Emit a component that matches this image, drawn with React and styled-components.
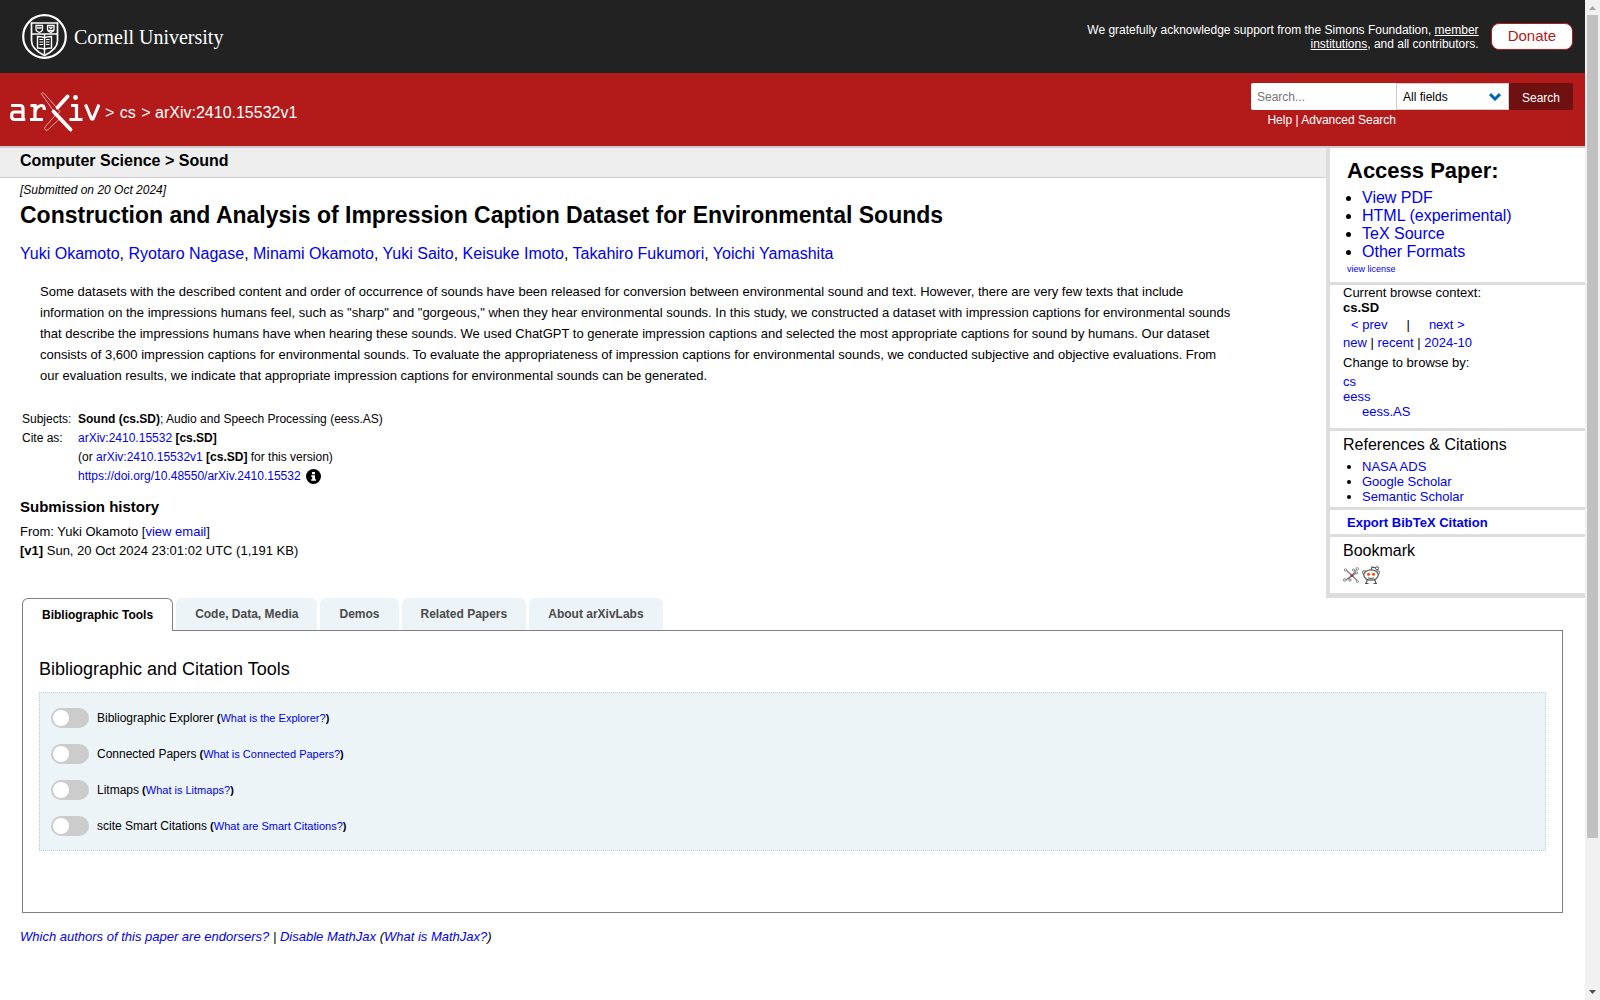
import React from "react";
import styled, { createGlobalStyle } from "styled-components";

const Global = createGlobalStyle`
  * { box-sizing: border-box; }
  body { margin: 0; background: #fff; color: #000; font: 13px/18px "Liberation Sans", Arial, sans-serif; overflow: hidden; }
  a { color: #0000ee; text-decoration: none; }
  h1, h2, h3, p, ul, blockquote { margin: 0; padding: 0; }
  button, input, select { font-family: inherit; }
`;

const Shell = styled.div`
  display: flex;
  align-items: flex-start;
`;
const Page = styled.div`
  flex: 1;
  min-width: 0;
`;

const Track = styled.div`
  flex: none;
  display: flex;
  flex-direction: column;
  align-items: center;
  width: 15px;
  height: 100vh;
  background: #f1f1f1;
`;
const Thumb = styled.div`
  width: 11px;
  height: 823px;
  margin-bottom: auto;
  background: #c1c1c1;
`;
const Arrow = styled.svg`
  display: block;
  flex: none;
  width: 15px;
  height: 15px;
  fill: ${(p) => p.$color};
`;

const CornellBar = styled.div`
  display: flex;
  align-items: center;
  justify-content: space-between;
  height: 73px;
  padding: 0 12px 0 22px;
  background: #222;
  color: #fff;
`;
const CornellLink = styled.a`
  display: flex;
  align-items: center;
  gap: 7px;
  color: #fff;
  font: 20px/24px "Liberation Serif", serif;
`;
const Crest = styled.svg`
  width: 45px;
  height: 45px;
`;
const Support = styled.div`
  display: flex;
  align-items: center;
  gap: 12px;
`;
const Thanks = styled.p`
  width: 400px;
  font-size: 12px;
  line-height: 14px;
  text-align: right;
  a { color: #fff; text-decoration: underline; }
`;
const Donate = styled.a`
  padding: 3px 16px 5px;
  border: 1px solid #b31b1b;
  border-radius: 8px;
  background: #fff;
  color: #b31b1b;
  font-size: 15px;
  line-height: 17px;
`;

const Banner = styled.header`
  display: flex;
  justify-content: space-between;
  height: 75px;
  padding: 10px 12px 0 10px;
  border-bottom: 2px solid #ccc;
  background: #b31b1b;
  color: #fff;
  a { color: #fff; }
`;
const Crumbs = styled.div`
  display: flex;
  align-items: center;
  gap: 5px;
  height: 60px;
  font-size: 16px;
  span a { margin: 0 1px; }
`;
const Logo = styled.svg`
  display: block;
  width: 90px;
  height: 42px;
`;
const SearchForm = styled.form`
  display: grid;
  grid-template-columns: 145px 113px 64px;
  grid-template-rows: 27px 20px;
`;
const SearchBox = styled.input`
  min-width: 0;
  padding: 0 6px;
  border: 0;
  border-radius: 2px 0 0 2px;
  background: #fff;
  font-size: 12px;
  &::placeholder { color: #757575; }
`;
const FieldWrap = styled.div`
  display: grid;
  align-items: center;
  > * { grid-area: 1 / 1; }
  svg { justify-self: end; margin-right: 8px; pointer-events: none; }
`;
const FieldSelect = styled.select`
  appearance: none;
  width: 100%;
  height: 27px;
  padding: 0 6px;
  border: 1px solid #ccc;
  border-radius: 0;
  background: #fff;
  color: #000;
  font-size: 12px;
`;
const SearchButton = styled.button`
  padding: 2px 0 0;
  border: 0;
  border-radius: 0 2px 2px 0;
  background: #701111;
  color: #fff;
  font-size: 12px;
`;
const SearchHelp = styled.div`
  font-size: 12px;
  line-height: 20px;
  text-align: right;
  white-space: nowrap;
`;

const Columns = styled.div`
  display: flex;
  align-items: flex-start;
`;
const Article = styled.main`
  flex: 1;
  min-width: 0;
`;
const SubjectBar = styled.div`
  height: 30px;
  padding: 4px 20px;
  border-bottom: 1px solid #ccc;
  background: #eee;
  h1 { font-size: 16px; line-height: 18px; }
`;
const Body = styled.div`
  padding: 4px 40px 0 20px;
`;
const Dateline = styled.div`
  font-size: 12px;
  line-height: 16px;
  font-style: italic;
`;
const Title = styled.h1`
  margin: 3px 0 13px;
  font-size: 23px;
  line-height: 28px;
`;
const Authors = styled.div`
  margin-bottom: 15px;
  font-size: 16px;
  line-height: 24px;
`;
const Abstract = styled.blockquote`
  margin: 0 0 24px 20px;
  font-size: 13px;
  line-height: 21px;
`;
const Meta = styled.table`
  border-spacing: 0;
  font-size: 12px;
  line-height: 19px;
  td { padding: 0 0 0 2px; vertical-align: top; }
  td:first-child { width: 56px; }
`;
const InfoIcon = styled.svg`
  width: 15px;
  height: 15px;
  margin-left: 2px;
  vertical-align: middle;
`;
const HistoryTitle = styled.h2`
  margin: 12px 0 6px;
  font-size: 15px;
  line-height: 18px;
`;
const History = styled.div`
  font-size: 13px;
  line-height: 19px;
`;

const Side = styled.aside`
  width: 259px;
  border: solid #ddd;
  border-width: 0 0 5px 4px;
`;
const Box = styled.section`
  padding: ${(p) => p.$pad};
  & + & { border-top: 3px solid #ddd; }
`;
const AccessTitle = styled.h2`
  font-size: 22px;
  line-height: 26px;
`;
const SideTitle = styled.h3`
  font-size: 16px;
  font-weight: 400;
  line-height: 18px;
`;
const Links = styled.ul`
  margin: ${(p) => p.$margin};
  padding-left: ${(p) => p.$indent || "19px"};
  list-style: ${(p) => (p.$plain ? "none" : "disc")};
  font-size: ${(p) => p.$size || "13px"};
  line-height: ${(p) => p.$line || "15px"};
`;
const License = styled.div`
  font-size: 9px;
  line-height: 16px;
`;
const SideLine = styled.div`
  line-height: ${(p) => p.$line || "15px"};
`;
const PrevNext = styled(SideLine)`
  display: flex;
  gap: 19px;
  padding-left: 8px;
`;
const ExportLink = styled.a`
  display: block;
  font-weight: 700;
  line-height: 16px;
`;
const Icons = styled.div`
  display: flex;
  gap: 3px;
  margin-top: 6px;
  a, svg { display: block; }
`;

const Labs = styled.section`
  padding: 0 22px;
`;
const TabList = styled.div`
  display: flex;
  gap: 3px;
  margin-bottom: -1px;
`;
const Tab = styled.button`
  height: ${(p) => (p.$active ? 33 : 32)}px;
  padding: 0 19px;
  border: ${(p) => (p.$active ? "1px solid #808080" : "0")};
  border-bottom: 0;
  border-radius: 6px 6px 0 0;
  background: ${(p) => (p.$active ? "#fff" : "#ecf4f8")};
  color: ${(p) => (p.$active ? "#000" : "#4a4a4a")};
  font-size: 12px;
  font-weight: 700;
`;
const Panel = styled.div`
  padding: 25px 16px 61px;
  border: 1px solid #808080;
`;
const PanelTitle = styled.h2`
  margin-bottom: 10px;
  font-size: 18px;
  font-weight: 400;
  line-height: 26px;
`;
const Tools = styled.div`
  display: grid;
  gap: 16px;
  padding: 15px 11px 14px;
  border: 1px dotted #b5cfda;
  background: #ecf4f8;
`;
const Tool = styled.div`
  display: flex;
  align-items: center;
  gap: 8px;
  font-size: 11px;
  line-height: 20px;
  label { font-size: 12px; }
`;
const Switch = styled.input`
  appearance: none;
  display: flex;
  align-items: center;
  width: 38px;
  height: 20px;
  margin: 0;
  padding: 2px;
  border-radius: 10px;
  background: #ccc;
  &::before { content: ""; width: 16px; height: 16px; border-radius: 50%; background: #fff; }
  &:checked { justify-content: flex-end; background: #1e8bc3; }
`;
const Endorsers = styled.div`
  padding: 15px 20px;
  font-style: italic;
`;

const authors = ["Yuki Okamoto", "Ryotaro Nagase", "Minami Okamoto", "Yuki Saito", "Keisuke Imoto", "Takahiro Fukumori", "Yoichi Yamashita"];
const tabs = ["Bibliographic Tools", "Code, Data, Media", "Demos", "Related Papers", "About arXivLabs"];
const tools = [
  ["Bibliographic Explorer", "What is the Explorer?"],
  ["Connected Papers", "What is Connected Papers?"],
  ["Litmaps", "What is Litmaps?"],
  ["scite Smart Citations", "What are Smart Citations?"],
];

const LinkItems = ({ items }) => items.map((t) => <li key={t}><a href="#">{t}</a></li>);

const CornellCrest = () => (
  <Crest viewBox="0 0 45 45" fill="none" stroke="#fff" aria-hidden="true">
    <circle cx="22.5" cy="22.5" r="21.3" strokeWidth="2.2" />
    <path strokeWidth="1.7" d="M9.500 9h26v18c0 6.500-6 11-13 14.500C15.500 38 9.500 33.500 9.500 27z" />
    <path strokeWidth="1.5" d="M9.500 20h26" />
    <path strokeWidth="1.3" d="M14 11.500h6.500v3.800c0 1.800-1.800 2.700-3.200 3.200-1.500-.5-3.300-1.400-3.300-3.200zM25.500 11.500H32v3.800c0 1.800-1.800 2.700-3.200 3.200-1.500-.5-3.300-1.400-3.300-3.200zM15 14h4.500M27 13l1.800 1.500L30.500 13M26.500 16.500h4.500" />
    <path strokeWidth="1.4" d="M15.500 22.500c3 0 5.500.3 7 1.500 1.500-1.200 4-1.500 7-1.500v11.500c-3 0-5.500.3-7 1.500-1.500-1.200-4-1.500-7-1.500zM22.500 20v20.500" />
    <path strokeWidth="1.1" d="M17.500 25.500H21M17.500 28H21M17.500 30.500H21M24 25.500h3.500M24 28h3.500M24 30.500h3.500" />
  </Crest>
);

const ArxivLogo = () => (
  <Logo viewBox="0 0 90 42" fill="none" stroke="#fff" role="img" aria-label="arXiv">
    <path strokeWidth="3.2" strokeLinejoin="round" d="M1 13.500H10q3 0 3 3v11H4.500q-2.800 0-2.800-3V23q0-3 2.800-3H13M12 27.500h3.200" />
    <path strokeWidth="3.2" d="M20.500 13.500H25v14M20 27.500h13M25 19.500q2-6 7-6 2.300 0 2.300 4.500" />
    <path strokeWidth=".9" stroke="#f0b4b4" strokeLinejoin="round" d="M31.200 1.500q1.300-1.500 3 0L50 19.500 46.500 23zM46 22.500l4.500 3.500-12.300 11.500q-1.600 1.600-3 .3-1.300-1.400 0-3z" />
    <path strokeWidth="3.800" strokeLinecap="round" d="M57.500 4.500 47.500 15.500M43.500 19.500 60.500 37.500" />
    <path strokeWidth="3.200" d="M61 13.500h5.500v14M59.500 27.500h13" />
    <path strokeWidth="3.200" strokeLinejoin="round" d="M75.500 12.500 81.500 27h1.500l6-14.500" />
    <circle cx="65.500" cy="5.500" r="2.400" fill="#fff" stroke="none" />
  </Logo>
);

const BibSonomy = () => (
  <svg width="16" height="17" viewBox="0 0 16 17" fill="none" stroke="#777" aria-hidden="true">
    <path d="M2.500 3.500 9 9.500 14 14.500M14 3 9 9.500 2 14.500M9 9.500l-4 3.500M9 9.500l3.500-2" strokeWidth="1.100" />
    <g fill="#fff" strokeWidth=".9">
      <circle cx="2.500" cy="4" r="1.200" /><circle cx="14.300" cy="2.800" r="1.200" /><circle cx="10.500" cy="4" r="1.100" />
      <circle cx="1.800" cy="14" r="1.300" /><circle cx="7" cy="14" r="1.200" /><circle cx="14.500" cy="15.500" r="1.100" /><circle cx="13.500" cy="7" r="1.100" />
    </g>
    <circle cx="9" cy="9.500" r="1.500" fill="#b0304a" stroke="none" />
  </svg>
);

const Reddit = () => (
  <svg width="18" height="18" viewBox="0 0 18 18" fill="#fff" stroke="#555" aria-hidden="true">
    <path d="M5.500 13 4 17.500M12.500 13l1.500 4.500M3 17.500h3.500M11.500 17.500H15M9 4l1-3 4 .8" fill="none" strokeWidth="1.200" />
    <circle cx="15" cy="2.200" r="1.500" /><circle cx="2.200" cy="6.500" r="1.800" /><circle cx="15.800" cy="6.500" r="1.800" />
    <ellipse cx="9" cy="9" rx="7.200" ry="5.200" strokeWidth="1.200" />
    <path d="M6 11.800q3 1.500 6 0" fill="none" />
    <circle cx="6.500" cy="8.300" r="1.500" fill="#ff4500" stroke="none" /><circle cx="11.500" cy="8.300" r="1.500" fill="#ff4500" stroke="none" />
  </svg>
);

export default function App() {
  return (
    <Shell>
      <Global />
      <Page>
        <CornellBar>
          <CornellLink href="#"><CornellCrest />Cornell University</CornellLink>
          <Support>
            <Thanks>We gratefully acknowledge support from the Simons Foundation, <a href="#">member institutions</a>, and all contributors.</Thanks>
            <Donate href="#">Donate</Donate>
          </Support>
        </CornellBar>
        <Banner>
          <Crumbs>
            <a href="#"><ArxivLogo /></a>
            <span>&gt; <a href="#">cs</a> &gt; arXiv:2410.15532v1</span>
          </Crumbs>
          <SearchForm onSubmit={(e) => e.preventDefault()}>
            <SearchBox type="text" placeholder="Search..." aria-label="Search term" />
            <FieldWrap>
              <FieldSelect aria-label="Field to search"><option>All fields</option></FieldSelect>
              <svg width="12" height="8" viewBox="0 0 12 8" fill="none" stroke="#0068ac" strokeWidth="3" aria-hidden="true"><path d="M1 1.200 6 6l5-4.800" /></svg>
            </FieldWrap>
            <SearchButton type="submit">Search</SearchButton>
            <SearchHelp><a href="#">Help</a> | <a href="#">Advanced Search</a></SearchHelp>
          </SearchForm>
        </Banner>

        <Columns>
          <Article>
            <SubjectBar><h1>Computer Science &gt; Sound</h1></SubjectBar>
            <Body>
              <Dateline>[Submitted on 20 Oct 2024]</Dateline>
              <Title>Construction and Analysis of Impression Caption Dataset for Environmental Sounds</Title>
              <Authors>
                {authors.map((a, i) => <React.Fragment key={a}>{i > 0 && ", "}<a href="#">{a}</a></React.Fragment>)}
              </Authors>
              <Abstract>
                Some datasets with the described content and order of occurrence of sounds have been released for conversion between environmental sound and text. However, there are very few texts that include<br />
                information on the impressions humans feel, such as "sharp" and "gorgeous," when they hear environmental sounds. In this study, we constructed a dataset with impression captions for environmental sounds<br />
                that describe the impressions humans have when hearing these sounds. We used ChatGPT to generate impression captions and selected the most appropriate captions for sound by humans. Our dataset<br />
                consists of 3,600 impression captions for environmental sounds. To evaluate the appropriateness of impression captions for environmental sounds, we conducted subjective and objective evaluations. From<br />
                our evaluation results, we indicate that appropriate impression captions for environmental sounds can be generated.
              </Abstract>
              <Meta>
                <tbody>
                  <tr><td>Subjects:</td><td><b>Sound (cs.SD)</b>; Audio and Speech Processing (eess.AS)</td></tr>
                  <tr><td>Cite as:</td><td><a href="#">arXiv:2410.15532</a> <b>[cs.SD]</b></td></tr>
                  <tr><td /><td>(or <a href="#">arXiv:2410.15532v1</a> <b>[cs.SD]</b> for this version)</td></tr>
                  <tr><td /><td><a href="#">https://doi.org/10.48550/arXiv.2410.15532</a>{" "}
                    <InfoIcon viewBox="0 0 15 15" aria-hidden="true"><circle cx="7.500" cy="7.500" r="7.500" /><path fill="#fff" d="M6 3h3v2.200H6zM5.200 6.200H9v4h1v1.600H5.200v-1.600h1V7.800h-1z" /></InfoIcon>
                  </td></tr>
                </tbody>
              </Meta>
              <HistoryTitle>Submission history</HistoryTitle>
              <History>From: Yuki Okamoto [<a href="#">view email</a>]<br /><b>[v1]</b> Sun, 20 Oct 2024 23:01:02 UTC (1,191 KB)</History>
            </Body>
          </Article>

          <Side>
            <Box $pad="10px 0 5px 17px">
              <AccessTitle>Access Paper:</AccessTitle>
              <Links $size="16px" $line="18px" $indent="15px" $margin="5px 0 0">
                <LinkItems items={["View PDF", "HTML (experimental)", "TeX Source", "Other Formats"]} />
              </Links>
              <License><a href="#">view license</a></License>
            </Box>
            <Box $pad="0 0 9px 13px">
              <SideLine>Current browse context:</SideLine>
              <SideLine><b>cs.SD</b></SideLine>
              <PrevNext $line="19px"><a href="#">&lt; prev</a><span>|</span><a href="#">next &gt;</a></PrevNext>
              <SideLine $line="18px"><a href="#">new</a> | <a href="#">recent</a> | <a href="#">2024-10</a></SideLine>
              <SideLine $line="22px">Change to browse by:</SideLine>
              <SideLine><a href="#">cs</a></SideLine>
              <SideLine><a href="#">eess</a></SideLine>
              <Links $plain><li><a href="#">eess.AS</a></li></Links>
            </Box>
            <Box $pad="5px 0 3px 13px">
              <SideTitle>References &amp; Citations</SideTitle>
              <Links $margin="5px 0 0"><LinkItems items={["NASA ADS", "Google Scholar", "Semantic Scholar"]} /></Links>
            </Box>
            <Box $pad="5px 0 3px 17px"><ExportLink href="#">Export BibTeX Citation</ExportLink></Box>
            <Box $pad="5px 0 9px 13px">
              <SideTitle>Bookmark</SideTitle>
              <Icons>
                <a href="#" aria-label="BibSonomy"><BibSonomy /></a>
                <a href="#" aria-label="Reddit"><Reddit /></a>
              </Icons>
            </Box>
          </Side>
        </Columns>

        <Labs>
          <TabList role="tablist">
            {tabs.map((t, i) => <Tab key={t} type="button" role="tab" aria-selected={i === 0} $active={i === 0}>{t}</Tab>)}
          </TabList>
          <Panel role="tabpanel">
            <PanelTitle>Bibliographic and Citation Tools</PanelTitle>
            <Tools>
              {tools.map(([name, q], i) => (
                <Tool key={name}>
                  <Switch type="checkbox" role="switch" id={`tool-${i}`} />
                  <span><label htmlFor={`tool-${i}`}>{name}</label> <b>(</b><a href="#">{q}</a><b>)</b></span>
                </Tool>
              ))}
            </Tools>
          </Panel>
        </Labs>
        <Endorsers><a href="#">Which authors of this paper are endorsers?</a> | <a href="#">Disable MathJax</a> (<a href="#">What is MathJax?</a>)</Endorsers>
      </Page>
      <Track aria-hidden="true">
        <Arrow viewBox="0 0 15 15" $color="#a3a3a3"><path d="M4 10h7L7.500 6z" /></Arrow>
        <Thumb />
        <Arrow viewBox="0 0 15 15" $color="#505050"><path d="M4 5h7L7.500 9z" /></Arrow>
      </Track>
    </Shell>
  );
}
